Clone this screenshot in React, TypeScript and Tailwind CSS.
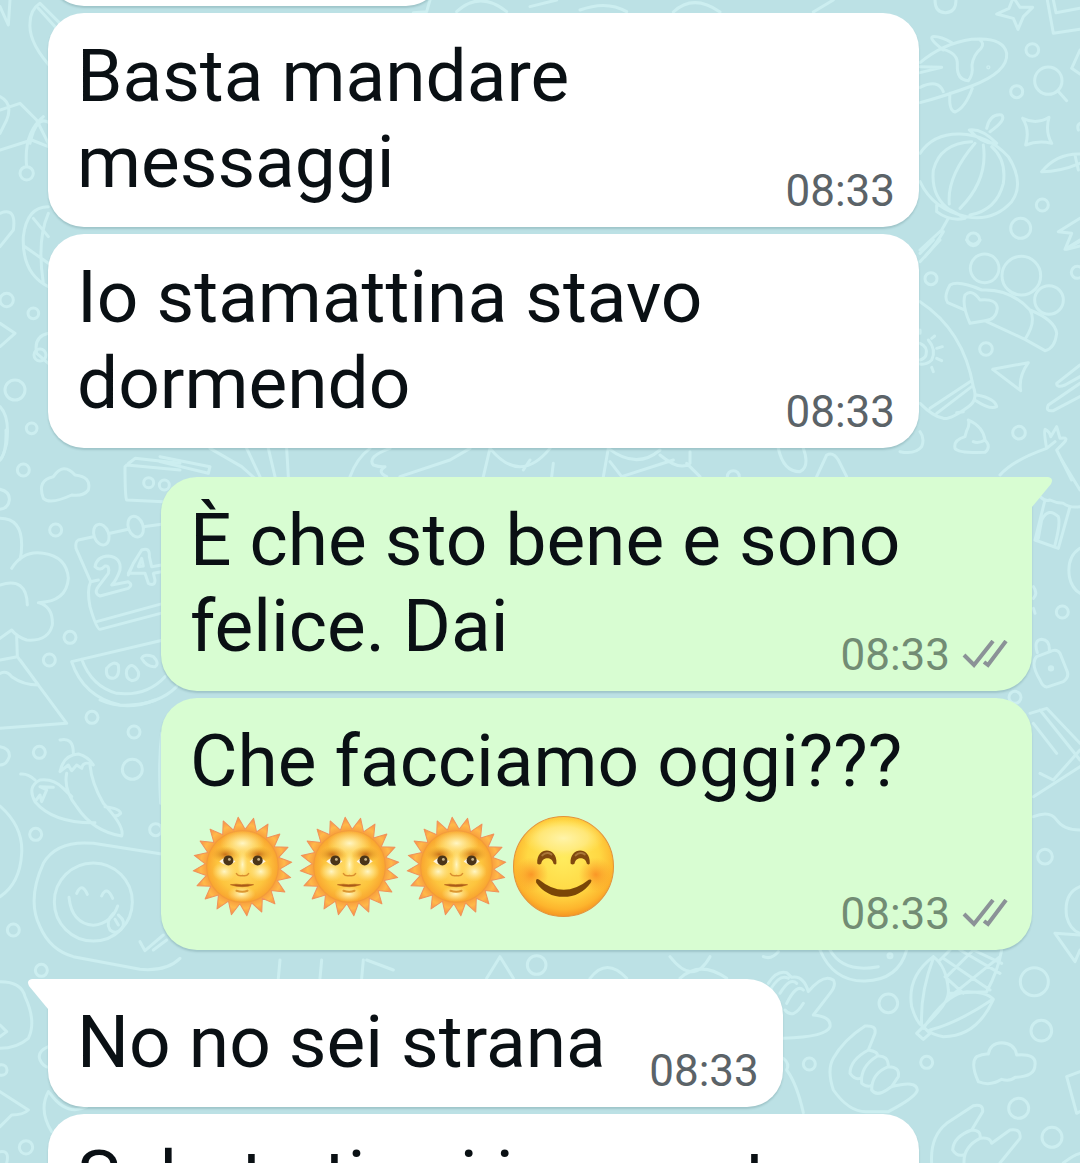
import type { ReactNode } from 'react'

interface Message {
  id: string
  text: string
  time: string
  outgoing?: boolean
  tail?: boolean
  emojis?: ('sun' | 'smile')[]
}

const messages: Message[] = [
  { id: '1', text: 'Basta mandare messaggi', time: '08:33' },
  { id: '2', text: 'Io stamattina stavo dormendo', time: '08:33' },
  { id: '3', text: 'È che sto bene e sono felice. Dai', time: '08:33', outgoing: true, tail: true },
  {
    id: '4',
    text: 'Che facciamo oggi???',
    time: '08:33',
    outgoing: true,
    emojis: ['sun', 'sun', 'sun', 'smile']
  },
  { id: '5', text: 'No no sei strana', time: '08:33', tail: true },
  { id: '6', text: 'Sabato ti sei incazzata', time: '08:33' }
]

const sunRays = Array.from({ length: 40 }, (_, i) => {
  const radius = i % 2 === 0 ? 49 : 37
  const angle = ((-95 + i * 9) * Math.PI) / 180
  return `${(50 + radius * Math.cos(angle)).toFixed(1)},${(50 + radius * Math.sin(angle)).toFixed(1)}`
}).join(' ')

function SunEmoji() {
  return (
    <svg viewBox="0 0 100 100" className="h-[101px] w-[101px]" aria-hidden="true">
      <defs>
        <radialGradient id="sunRay">
          <stop offset="0.7" stopColor="#f79a3a" />
          <stop offset="0.85" stopColor="#ffb94a" />
          <stop offset="1" stopColor="#f78f45" />
        </radialGradient>
        <radialGradient id="sunFace">
          <stop offset="0" stopColor="#ffdc6a" />
          <stop offset="0.7" stopColor="#fdc53e" />
          <stop offset="1" stopColor="#f9a52f" />
        </radialGradient>
        <radialGradient id="sunLight">
          <stop offset="0" stopColor="#fff6c4" />
          <stop offset="1" stopColor="#ffe88a" stopOpacity="0" />
        </radialGradient>
        <radialGradient id="sunShade">
          <stop offset="0" stopColor="#c9721a" />
          <stop offset="1" stopColor="#eb9c27" stopOpacity="0" />
        </radialGradient>
      </defs>
      <polygon points={sunRays} fill="url(#sunRay)" stroke="#f0925a" strokeWidth="1" strokeLinejoin="round" />
      <circle cx="50" cy="50" r="35.5" fill="url(#sunFace)" stroke="#f29a3a" strokeWidth="1" />
      <ellipse cx="50" cy="27" rx="22" ry="13" fill="url(#sunLight)" />
      <ellipse cx="32" cy="55" rx="12" ry="10" fill="url(#sunLight)" />
      <ellipse cx="68" cy="55" rx="12" ry="10" fill="url(#sunLight)" />
      <ellipse cx="49" cy="77" rx="14" ry="8" fill="url(#sunLight)" />
      <ellipse cx="33" cy="38" rx="14" ry="8" fill="url(#sunShade)" />
      <ellipse cx="66" cy="38" rx="14" ry="8" fill="url(#sunShade)" />
      <ellipse cx="50" cy="48" rx="5" ry="14" fill="url(#sunLight)" />
      <path d="M27 45Q35 37 43 45Q35 52 27 45ZM57 45Q65 37 73 45Q65 52 57 45Z" fill="#fff5df" />
      <circle cx="36" cy="44" r="5" fill="#4a3418" />
      <circle cx="65" cy="44" r="5" fill="#4a3418" />
      <circle cx="37" cy="43" r="1.4" fill="#c9b48a" />
      <circle cx="66" cy="43" r="1.4" fill="#c9b48a" />
      <path d="M44 57Q46 60 50 59Q54 60 56 57" fill="none" stroke="#d98f30" strokeWidth="1.5" strokeLinecap="round" />
      <path d="M38 68Q44 67 49 68Q55 67 61 68Q50 72 38 68Z" fill="#a85a18" stroke="#b7641a" strokeWidth="0.6" />
      <path d="M44 74Q50 76 55 74" fill="none" stroke="#dc9630" strokeWidth="2" strokeLinecap="round" />
    </svg>
  )
}

function SmileEmoji() {
  return (
    <svg viewBox="0 0 100 100" className="h-[101px] w-[101px]" aria-hidden="true">
      <defs>
        <radialGradient id="smileFace" cx="0.5" cy="0.42" r="0.6">
          <stop offset="0" stopColor="#ffec5e" />
          <stop offset="0.6" stopColor="#ffd843" />
          <stop offset="0.85" stopColor="#fdb52d" />
          <stop offset="1" stopColor="#f48d1e" />
        </radialGradient>
        <radialGradient id="smileGloss">
          <stop offset="0" stopColor="#fff6b4" stopOpacity="0.9" />
          <stop offset="0.6" stopColor="#fff09a" stopOpacity="0.6" />
          <stop offset="1" stopColor="#ffec7a" stopOpacity="0" />
        </radialGradient>
        <radialGradient id="smileCheek">
          <stop offset="0" stopColor="#f9861f" stopOpacity="0.8" />
          <stop offset="1" stopColor="#fb9a25" stopOpacity="0" />
        </radialGradient>
      </defs>
      <circle cx="50" cy="50" r="49.5" fill="url(#smileFace)" stroke="#e3933a" strokeWidth="1" />
      <ellipse cx="50" cy="22" rx="40" ry="19" fill="url(#smileGloss)" />
      <circle cx="18" cy="58" r="17" fill="url(#smileCheek)" />
      <circle cx="82" cy="58" r="17" fill="url(#smileCheek)" />
      <path d="M24 47C23 30 44 30 43 47Q42 49 40 47C39 40 29 40 28 47Q26 49 24 47ZM57 47C56 30 77 30 76 47Q75 49 73 47C72 40 62 40 61 47Q59 49 57 47Z" fill="#80490f" />
      <path d="M29 39Q33 35 38 38M62 39Q66 35 71 38" fill="none" stroke="#a97639" strokeWidth="2" strokeLinecap="round" />
      <path d="M26 63Q50 83 75 63Q79 62 77 66Q67 80 50 80Q33 80 23 66Q22 61 26 63Z" fill="#7a4607" />
    </svg>
  )
}

function DoubleCheck() {
  return (
    <svg viewBox="0 0 46 30" className="h-[30px] w-[46px]" fill="none" stroke="currentColor" strokeWidth="4" aria-hidden="true">
      <path d="M2 15L12 25L31 1M22 22L26 25L44 1" />
    </svg>
  )
}

// Each part of the doodle paper is drawn on its own 3x grid
function Doodle({ x, y, children }: { x: number; y: number; children: ReactNode }) {
  return <g transform={`translate(${x} ${y}) scale(0.33333)`}>{children}</g>
}

function Wallpaper() {
  return (
    <svg
      viewBox="0 0 1080 1163"
      preserveAspectRatio="xMidYMin slice"
      className="absolute inset-0 h-full w-full"
      fill="none"
      stroke="#cceef0"
      strokeWidth="9"
      strokeLinecap="round"
      strokeLinejoin="round"
      aria-hidden="true"
    >
      {/* top left: leaves and stars */}
      <Doodle x={0} y={0}>
        <path d="M0 20L25 75L30 0M90 70Q85 130 160 210L240 130L120 10Q90 30 90 70M115 25L210 130M80 500Q70 400 130 350M90 430Q110 340 150 370" />
        <path d="M0 290Q40 310 20 360L0 400M0 330L60 310L110 360L145 430M0 450L95 420L145 440" />
        <circle cx="80" cy="520" r="20" />
        <path d="M145 620Q80 620 70 710Q65 820 145 860M100 655L145 710M75 740L145 790M145 640Q110 720 130 850" />
        <circle cx="20" cy="900" r="20" />
        <circle cx="100" cy="940" r="16" />
        <path d="M0 640Q50 620 40 690L0 740M0 970L45 1000L0 1040M145 1000Q100 1010 110 1060L145 1090" />
        <circle cx="45" cy="1170" r="30" />
        <circle cx="120" cy="1065" r="18" />
        <path d="M0 1220Q30 1250 20 1330Q10 1370 0 1380" />
        <circle cx="95" cy="1285" r="16" />
      </Doodle>
      {/* slivers between the first bubbles */}
      <Doodle x={420} y={0}>
        <path d="M30 0L20 35L-20 38M110 35Q180-30 260 35M330 20L410 0M480 30Q560 0 620 35M760 36Q820-20 900 36M1180 36L1240 0" />
      </Doodle>
      {/* rocket, lantern and sparkles */}
      <Doodle x={900} y={0}>
        <path d="M105 0Q105 38 136 38Q168 38 168 0M290 42L327 25L340-8L360 22L398 22L370 50L354 88L340 55ZM442 0L460 100L540 88M460 0L468 38L540 25" />
        <path d="M60 188Q130 130 215 118Q310 110 320 160Q325 215 215 258Q135 288 60 308M60 218L125 202L60 200M60 262Q115 235 130 275M130 150Q85 115 98 110Q120 108 155 128M130 148Q175 160 172 195Q170 240 205 242Q220 225 216 195Q220 165 243 145Q255 130 238 118M150 280Q145 330 165 336Q195 325 217 265" />
        <circle cx="265" cy="202" r="2" />
        <circle cx="397" cy="150" r="19" />
        <circle cx="350" cy="275" r="18" />
        <circle cx="445" cy="242" r="41" />
        <path d="M474 273L500 302M540 150L515 205L540 222M368 355Q410 375 447 352Q435 395 455 430Q415 420 377 435Q390 390 368 355" />
        <path d="M60 460Q100 400 180 402Q265 405 325 470Q375 550 335 605Q280 665 200 650Q100 630 60 545M215 425Q120 430 100 510Q92 590 150 630M225 430Q140 530 148 612M250 435Q265 540 180 625M275 440Q320 480 310 550Q290 630 210 645M208 390Q245 385 290 430Q250 435 208 390M260 385Q270 340 305 345Q320 360 270 395M110 615Q130 615 195 655Q150 665 110 635ZM145 655L125 690L60 750M130 695Q110 730 75 770" />
        <circle cx="427" cy="615" r="18" />
        <circle cx="362" cy="685" r="30" />
        <circle cx="220" cy="718" r="19" />
        <path d="M425 515Q470 460 540 462M425 515Q480 515 540 490M525 465L535 510M540 655L475 695L515 700L495 748L540 725" />
        <path d="M540 370Q530 375 535 390" />
      </Doodle>
      <Doodle x={900} y={240}>
        <path d="M60 40L100 0M60 65L120 0M200 0Q220 25 240 0" />
        <circle cx="93" cy="116" r="18" />
        <circle cx="254" cy="85" r="43" />
        <circle cx="364" cy="107" r="58" />
        <circle cx="447" cy="180" r="43" />
        <path d="M190 208L143 188Q130 170 150 135Q175 120 245 150Q330 145 390 210Q410 245 375 298L260 245M375 298L435 332Q465 325 470 280Q465 240 390 210M210 250Q185 195 195 165Q215 145 240 180Q290 175 292 205Q288 240 255 242Z" />
        <path d="M60 185Q190 270 220 440Q235 480 205 500Q150 540 130 535Q100 530 60 490M90 505L210 425M110 520L215 440M170 518L190 515M230 465Q285 475 290 500Q270 510 228 482M60 310Q85 320 78 345Q75 355 60 360M85 300Q110 330 95 360Q80 375 60 372M60 280L60 270M95 295L104 288M110 325L127 320M110 355L125 362M95 382L100 395" />
        <circle cx="258" cy="327" r="19" />
        <path d="M278 388L385 368Q355 410 362 452ZM205 540Q210 555 200 572L195 590Q160 600 165 625Q175 640 255 637Q275 620 255 600Q250 560 205 540M255 600Q235 612 220 605M60 575Q75 595 65 620Q45 645 0 635" />
        <circle cx="357" cy="578" r="19" />
        <path d="M300 705Q340 660 440 625Q430 570 435 568Q450 575 452 590L470 560L480 595Q510 590 490 610L470 630L515 720M440 625L465 605M540 375L470 430Q470 445 495 435L540 410M540 430L445 495Q435 515 460 512L540 470M500 25L540 0M500 28L540 18" />
        <circle cx="532" cy="97" r="18" />
      </Doodle>
      {/* tree, calendar and watermelon */}
      <Doodle x={0} y={430}>
        <circle cx="70" cy="120" r="18" />
        <path d="M0 90Q20 70 18 0M0 178Q30 185 28 210Q25 235 0 238M130 205Q110 150 160 140Q190 95 225 135Q275 140 265 180Q250 200 215 195Q150 225 130 205" />
        <circle cx="167" cy="300" r="18" />
        <path d="M0 265Q65 265 65 345Q65 370 60 388M35 415Q70 360 130 370Q200 380 205 445Q200 515 115 518Q160 530 157 585Q145 635 80 630Q50 620 35 600L0 625M0 465Q80 440 82 525M50 620L52 680L200 880L0 895M52 680L0 690M60 690L115 765Q70 765 35 740Q20 720 0 730" />
        <path d="M375 110Q375 200 380 210L490 215M380 105L540 120M385 100L405 85L540 100M375 110L405 85" />
        <circle cx="446" cy="158" r="15" />
        <circle cx="493" cy="165" r="15" />
        <path d="M280 320L235 330Q225 335 228 355L272 455Q260 480 270 530Q290 600 300 598L490 548M330 310L385 298M430 290L490 282M290 575L490 520M272 455L295 450" />
        <ellipse cx="304" cy="314" rx="22" ry="32" transform="rotate(-20 304 314)" />
        <ellipse cx="407" cy="290" rx="22" ry="32" transform="rotate(-20 407 290)" />
        <path d="M285 410Q290 380 325 378Q365 382 360 420Q350 450 335 465L385 455Q400 465 385 475L300 498Q280 490 295 470L325 430Q330 405 315 408Q300 425 285 410M425 360Q450 350 448 380L455 410L485 405M400 400L425 360M385 435L400 400L385 430L435 430L445 460Q465 470 465 450L460 430L485 425M415 410L425 385L430 408Z" />
        <circle cx="210" cy="622" r="18" />
        <circle cx="148" cy="690" r="18" />
        <path d="M215 695L490 630M215 695Q250 800 360 825Q470 830 530 770M245 688Q275 770 350 790Q440 800 495 740M320 715Q340 690 355 705Q360 740 340 745Q315 745 320 715M380 720Q395 690 415 725Q420 750 395 752Q375 745 380 720M425 685Q430 670 460 680Q480 700 465 710Q440 712 425 685" />
        <circle cx="276" cy="862" r="18" />
      </Doodle>
      {/* chilli peppers and camera */}
      <Doodle x={0} y={700}>
        <path d="M300 0Q380 35 465 0" />
        <circle cx="402" cy="96" r="18" />
        <circle cx="118" cy="157" r="18" />
        <circle cx="397" cy="208" r="30" />
        <path d="M0 140Q30 145 28 170Q20 195 0 195M180 120Q220 110 220 160M180 215Q190 165 235 162Q265 170 280 195Q250 180 245 205L230 195L215 212L205 195ZM200 220Q190 270 230 320Q280 395 365 408Q375 380 310 310Q275 250 270 195M62 222Q85 220 105 240M105 305Q80 260 120 240Q160 235 190 265L215 290M105 305L120 285L125 305L140 270L120 260L160 262M105 305Q160 370 285 368M315 320Q360 325 362 340Q350 352 340 345" />
        <circle cx="107" cy="403" r="18" />
        <circle cx="467" cy="389" r="18" />
        <path d="M0 318Q70 380 65 460Q60 550 0 590M490 463L280 430Q170 420 130 490Q80 600 120 680Q150 750 220 770L420 808Q500 815 540 775" />
        <circle cx="280" cy="606" r="117" />
        <path d="M207 592Q215 670 280 676Q335 670 353 618M230 580Q245 545 262 583M305 588Q320 555 338 595M340 640Q315 665 330 690Q350 705 365 685Q380 665 355 645M345 658L355 675M420 725L435 752L490 705M460 750L500 720" />
        <circle cx="40" cy="690" r="18" />
        <circle cx="124" cy="811" r="18" />
        <path d="M485 100Q475 190 482 310" />
      </Doodle>
      {/* slivers around the replies */}
      <Doodle x={160} y={430}>
        <path d="M0 80L150 110L145 130M0 95L145 130M150 55L245 110L290 150M260 55L300 140M325 55L345 140M380 55L385 140M570 140Q590 85 630 55M690 55Q620 80 640 105Q660 112 675 110Q650 125 680 140M720 140L870 90L930 55M970 140L990 55Q1080 165 1170 55M1180 100L1175 140M1090 120L1110 90M1330 140L1345 55Q1430 120 1500 60M1350 95L1385 140L1540 90M1500 75Q1560 125 1590 100L1590 65M1580 100L1620 140M1855 55Q1870 125 1920 125Q1950 110 1930 55M1970 140L2000 75Q2020 65 2035 90L2060 140" />
        <circle cx="1720" cy="140" r="18" />
      </Doodle>
      {/* shop and padlock */}
      <Doodle x={800} y={460}>
        <path d="M785 0L840 90M720 110Q735 125 750 120Q770 130 790 130Q810 145 840 140M705 240L775 265L810 140M705 240L735 120M715 235L725 180Q745 140 775 170Q782 190 765 255M840 265Q800 290 808 350Q815 385 840 400M700 380Q715 400 700 415M700 445L705 460M710 590Q690 610 720 660Q730 685 745 680L790 665Q810 650 800 630L780 580Q770 565 750 575ZM712 578Q700 540 725 538Q750 540 748 572" />
        <circle cx="753" cy="625" r="5" />
        <circle cx="787" cy="456" r="18" />
        <circle cx="645" cy="712" r="18" />
      </Doodle>
      <Doodle x={1020} y={700}>
        <path d="M30 40L80 25L180 130M60 30L180 180M180 200L40 290M180 150L100 240L60 220M40 70L110 160" />
        <path d="M40 350Q90 330 110 360T180 390M180 560Q130 580 140 650Q150 690 180 700" />
        <circle cx="75" cy="470" r="22" />
      </Doodle>
      {/* hands, corn and cloud */}
      <Doodle x={760} y={930}>
        <path d="M180 60Q220 155 315 153Q415 150 440 60M210 60Q250 130 355 110M10 80Q35 90 55 65" />
        <circle cx="390" cy="77" r="6" />
        <path d="M25 160Q50 120 80 128L95 142Q130 135 145 185Q190 130 220 150Q230 165 210 190L160 255Q215 260 210 290Q200 320 70 325M30 180Q60 130 85 145M60 190Q90 140 110 160M80 220Q110 160 130 180M75 240Q100 270 130 220" />
        <circle cx="385" cy="220" r="28" />
        <path d="M520 80Q440 140 455 230Q470 280 490 290Q570 220 565 180Q560 110 520 80M520 85Q480 190 485 285M490 295Q560 190 620 185Q680 185 700 208Q650 320 550 320Q520 315 500 300M510 300Q590 280 695 210M490 290L470 310L490 328L510 310ZM540 90L570 60M565 190L680 185Q715 120 725 60M560 140L640 60M570 200L720 80M600 60L720 130M550 85L690 180M555 140L610 190M640 60L725 100" />
        <circle cx="823" cy="155" r="42" />
        <circle cx="844" cy="302" r="31" />
        <circle cx="148" cy="402" r="18" />
        <circle cx="500" cy="397" r="18" />
        <path d="M70 385Q90 400 80 420Q110 460 130 548M325 545Q270 550 220 480Q200 420 220 385Q250 330 315 288Q350 285 345 310L325 360Q355 365 352 378Q385 375 385 410Q420 410 415 440L395 470Q470 450 472 480Q470 500 385 545ZM325 360Q270 390 270 430Q285 450 300 445M352 378Q300 410 305 460Q325 475 335 465M385 410Q335 430 335 480Q350 500 380 480Q400 465 395 470" />
        <path d="M655 455Q630 400 650 380Q670 370 685 372Q690 340 725 338Q765 340 770 375Q830 370 825 405Q825 440 765 442Q750 455 725 448Q690 470 655 455" />
        <circle cx="776" cy="535" r="30" />
        <circle cx="876" cy="622" r="30" />
        <path d="M515 699Q510 620 560 580L640 527Q670 520 668 545L635 600Q665 600 660 625Q690 620 695 640L750 600Q785 595 780 625L720 699M635 600Q580 620 578 660Q590 680 610 675M660 625Q610 650 612 699M885 10L960 15M885 10L945 95L960 60M960 425L920 440L950 550L960 545M910 699Q940 675 960 670" />
      </Doodle>
      <Doodle x={0} y={960}>
        <path d="M0 65Q65 65 75 110Q110 185 85 235Q50 265 0 265M0 195L20 215L0 230M145 260Q110 275 120 300Q130 320 145 322M0 395L85 450Q70 465 35 465L0 500M145 395Q115 450 155 515M0 575Q30 570 20 609M840 0L835 55M965 0L960 55M1090 0L1085 55M1100 0L1180 30M150 400Q200 470 260 440" />
        <circle cx="5" cy="330" r="16" />
        <circle cx="78" cy="562" r="20" />
      </Doodle>
      <Doodle x={480} y={950}>
        <circle cx="170" cy="45" r="28" />
        <path d="M20 85L60 20L100 85M330 85Q380 20 440 85M570 20Q640 110 690 20M600 85Q660 30 740 85" />
      </Doodle>
    </svg>
  )
}

function Bubble({ message }: { message: Message }) {
  const { text, time, outgoing, tail, emojis } = message
  return (
    <li
      className={`relative grid w-fit max-w-[871px] rounded-[36px] px-[29px] pt-5 pb-[22px] shadow-[0_2px_2px_rgba(30,70,80,0.18)] ${
        outgoing ? 'self-end bg-[#d8fdd2]' : 'self-start bg-white'
      } ${tail ? (outgoing ? 'mt-[22px] rounded-tr-none' : 'mt-[22px] rounded-tl-none') : ''}`}
    >
      {tail && (
        <svg
          viewBox="0 0 21 31"
          className={`absolute top-0 h-[31px] w-[21px] ${
            outgoing ? 'left-full fill-[#d8fdd2]' : 'right-full -scale-x-100 fill-white'
          }`}
          aria-hidden="true"
        >
          <path d="M0 0H16Q22 1 19 7L0 30Z" />
        </svg>
      )}
      <p className="col-start-1 row-start-1 text-[73px] leading-[86px] text-[#0a1014]">
        {text}{' '}
        {emojis && (
          <span className="ml-0.5 inline-flex h-[124px] items-center gap-[6px] align-top">
            {emojis.map((emoji, index) =>
              emoji === 'sun' ? <SunEmoji key={index} /> : <SmileEmoji key={index} />
            )}
          </span>
        )}
        {/* keeps the last line clear of the time */}
        <span className="inline-block h-px w-[130px]" />
      </p>
      <div
        className={`col-start-1 row-start-1 -mr-[5px] -mb-[12px] flex items-center gap-3 self-end justify-self-end text-[44px] leading-[52px] ${
          outgoing ? 'text-[#728c74]' : 'text-[#5b6368]'
        }`}
      >
        <time>{time}</time>
        {outgoing && (
          <span className="text-[#8b9297]">
            <DoubleCheck />
          </span>
        )}
      </div>
    </li>
  )
}

export default function App() {
  return (
    <main className="relative h-screen overflow-hidden bg-[#bce1e5] font-[Roboto,sans-serif]">
      <Wallpaper />
      <ul className="relative flex flex-col gap-[7px] px-12">
        <li className="-mt-[122px] h-32 w-[394px] rounded-[36px] bg-white shadow-[0_2px_2px_rgba(30,70,80,0.18)]" />
        {messages.map((message) => (
          <Bubble key={message.id} message={message} />
        ))}
      </ul>
    </main>
  )
}
